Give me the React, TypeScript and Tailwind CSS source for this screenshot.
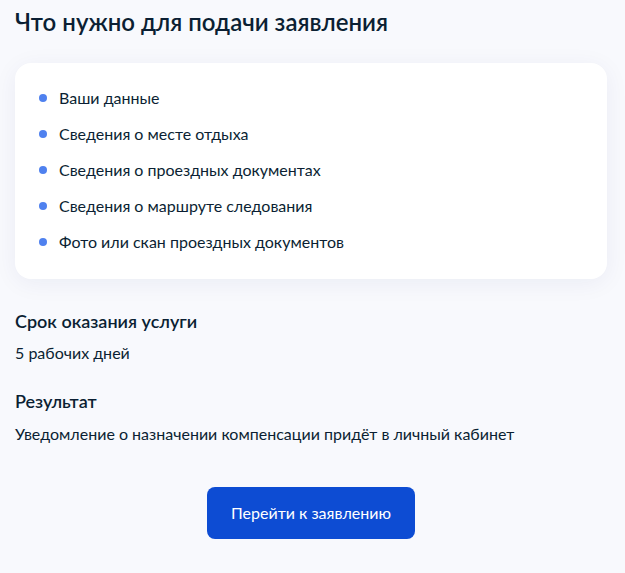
const items = [
  "Ваши данные",
  "Сведения о месте отдыха",
  "Сведения о проездных документах",
  "Сведения о маршруте следования",
  "Фото или скан проездных документов",
];

export default function App() {
  return (
    <div
      className="min-h-[573px] bg-[#f8f9fd] pl-[15px] pr-[18px] pt-[6px] pb-8 text-[#0b1f33]"
      style={{ fontFamily: "Lato, 'Noto Sans', sans-serif" }}
    >
      <h2 className="text-[24px] font-semibold leading-[32px]">
        Что нужно для подачи заявления
      </h2>

      <div className="mt-[25px] rounded-[16px] bg-white px-[24px] pt-[23px] pb-[25px] shadow-[0_4px_24px_rgba(16,32,96,0.06)]">
        <ul className="flex flex-col gap-[12px]">
          {items.map((item) => (
            <li key={item} className="flex items-center gap-[12px] text-[16px] leading-[24px]">
              <span className="h-[8px] w-[8px] shrink-0 rounded-full bg-[#4f81ef]" />
              {item}
            </li>
          ))}
        </ul>
      </div>

      <div className="mt-[30px]">
        <h3 className="text-[18px] font-semibold leading-[24px]">Срок оказания услуги</h3>
        <p className="mt-[8px] text-[16px] leading-[24px]">5 рабочих дней</p>
      </div>

      <div className="mt-[24px]">
        <h3 className="text-[18px] font-semibold leading-[24px]">Результат</h3>
        <p className="mt-[9px] text-[16px] leading-[24px]">
          Уведомление о назначении компенсации придёт в личный кабинет
        </p>
      </div>

      <div className="mt-[41px] flex justify-center">
        <button className="h-[52px] rounded-[8px] bg-[#0d4cd3] px-[24px] text-[16px] leading-[24px] text-white">
          Перейти к заявлению
        </button>
      </div>
    </div>
  );
}
